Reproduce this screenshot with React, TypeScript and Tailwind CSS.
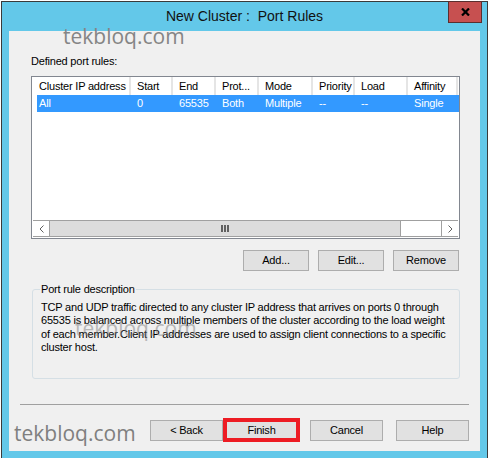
import React from "react";

const cols = [
  { wc: "w-[98px]", rc: "w-[94px] pl-[2px]", h: "Cluster IP address", v: "All" },
  { wc: "w-[42px]", rc: "w-[42px] pl-[6px]", h: "Start", v: "0" },
  { wc: "w-[43px]", rc: "w-[43px] pl-[6px]", h: "End", v: "65535" },
  { wc: "w-[43px]", rc: "w-[43px] pl-[6px]", h: "Prot...", v: "Both" },
  { wc: "w-[54px]", rc: "w-[54px] pl-[6px]", h: "Mode", v: "Multiple" },
  { wc: "w-[42px]", rc: "w-[42px] pl-[6px]", h: "Priority", v: "--" },
  { wc: "w-[53px]", rc: "w-[53px] pl-[6px]", h: "Load", v: "--" },
  { wc: "w-[50px]", rc: "w-[50px] pl-[6px]", h: "Affinity", v: "Single" },
];

const font = "font-['Liberation_Sans',Arial,sans-serif] text-[11px] tracking-[-0.2px]";

function Btn({ label, w }: { label: string; w: string }) {
  return (
    <div
      className={`${w} h-[21px] bg-[#E1E1E1] border border-[#ADADAD] flex items-center justify-center text-black whitespace-nowrap`}
    >
      {label}
    </div>
  );
}

export default function App() {
  return (
    <div className={`relative w-[488px] h-[458px] bg-white overflow-hidden ${font}`}>
      <div className="mt-[1px] ml-[1px] w-[487px] h-[457px] bg-[#63C8E9] border-l border-t border-r border-[#3A3A3A] flex flex-col">
        {/* Title bar */}
        <div className="h-[29px] flex items-center justify-center">
          <span className="text-[14px] tracking-normal text-[#111] whitespace-pre font-['Liberation_Sans',Arial,sans-serif]">
            New Cluster :  Port Rules
          </span>
        </div>
        {/* Client */}
        <div className="ml-[7px] w-[471px] h-[420px] bg-[#F0F0F0] flex flex-col">
          <div className="mt-[24px] ml-[22px] h-[13px] leading-[13px] text-black whitespace-nowrap">
            Defined port rules:
          </div>
          {/* List */}
          <div className="mt-[8px] ml-[22px] w-[429px] h-[163px] border border-[#828790] bg-white flex flex-col">
            <div className="ml-[1px] h-[18px] flex">
              {cols.map((c) => (
                <div
                  key={c.h}
                  className={`${c.wc} h-full border-r-2 border-[#E5E5E5] pl-[6px] flex items-center text-black whitespace-nowrap overflow-hidden`}
                >
                  {c.h}
                </div>
              ))}
            </div>
            <div className="ml-[5px] h-[17px] bg-[#3399FF] flex">
              {cols.map((c) => (
                <div
                  key={c.h}
                  className={`${c.rc} h-full flex items-center text-white whitespace-nowrap overflow-hidden`}
                >
                  {c.v}
                </div>
              ))}
            </div>
            <div className="flex-1" />
            {/* Scrollbar */}
            <div className="mb-[1px] ml-[1px] w-[425px] h-[17px] flex border-t border-b border-[#A0A0A0]">
              <div className="w-[16px] bg-white flex items-center justify-center">
                <svg width="5" height="8" viewBox="0 0 5 8">
                  <polyline points="4.5,0.5 1,4 4.5,7.5" fill="none" stroke="#606060" strokeWidth="1" />
                </svg>
              </div>
              <div className="w-[352px] bg-[#DCDCDC] border-x border-[#A0A0A0] flex items-center justify-center gap-[1px]">
                <div className="w-[2px] h-[7px] bg-[#606060]" />
                <div className="w-[2px] h-[7px] bg-[#606060]" />
                <div className="w-[2px] h-[7px] bg-[#606060]" />
              </div>
              <div className="w-[40px] bg-white" />
              <div className="w-[17px] border-l border-[#A0A0A0] bg-white flex items-center justify-center">
                <svg width="5" height="8" viewBox="0 0 5 8">
                  <polyline points="0.5,0.5 4,4 0.5,7.5" fill="none" stroke="#606060" strokeWidth="1" />
                </svg>
              </div>
            </div>
          </div>
          {/* Add / Edit / Remove */}
          <div className="mt-[11px] ml-[234px] flex gap-[9px]">
            <Btn label="Add..." w="w-[66px]" />
            <Btn label="Edit..." w="w-[66px]" />
            <Btn label="Remove" w="w-[66px]" />
          </div>
          {/* Group box */}
          <div className="relative mt-[18px] ml-[23px] w-[428px] h-[90px] border border-[#D5DFE5] rounded-[3px]">
            <div className="absolute -top-[7px] left-[7px] px-[1px] bg-[#F0F0F0] leading-[13px] text-black whitespace-nowrap">
              Port rule description
            </div>
            <div className="pt-[11px] pl-[8px] leading-[13.33px] text-black whitespace-nowrap">
              <div>TCP and UDP traffic directed to any cluster IP address that arrives on ports 0 through</div>
              <div>65535 is balanced across multiple members of the cluster according to the load weight</div>
              <div>of each member.Client IP addresses are used to assign client connections to a specific</div>
              <div>cluster host.</div>
            </div>
          </div>
          {/* Separator */}
          <div className="mt-[25px] ml-[11px] w-[449px] h-px bg-[#A0A0A0]" />
          {/* Bottom buttons */}
          <div className="mt-[13px] ml-[141px] h-[24px] flex items-center">
            <Btn label="< Back" w="w-[73px]" />
            <div className="w-[77px] h-[24px] border-[4px] border-[#ED1C24] bg-[#E1E1E1] flex items-center justify-center text-black">
              Finish
            </div>
            <div className="ml-[10px]">
              <Btn label="Cancel" w="w-[73px]" />
            </div>
            <div className="ml-[13px]">
              <Btn label="Help" w="w-[73px]" />
            </div>
          </div>
        </div>
      </div>

      {/* Close button */}
      <div className="absolute left-[448px] top-[1px] w-[34px] h-[22px] bg-[#C75050] border border-[#5A2E2E] flex items-center justify-center">
        <svg width="9" height="8" viewBox="0 0 9 8">
          <path d="M1 0.5 L8 7.5 M8 0.5 L1 7.5" stroke="#000" strokeWidth="2.2" />
        </svg>
      </div>

      {/* Watermarks */}
      <div className="absolute left-[63px] top-[26px] text-[21px] leading-[21px] tracking-normal text-[#858585] font-['Open_Sans',sans-serif] whitespace-nowrap">
        tekbloq.com
      </div>
      <div className="absolute left-[75px] top-[318px] text-[21px] leading-[21px] tracking-normal text-[#808080] opacity-50 font-['Open_Sans',sans-serif] whitespace-nowrap">
        tekbloq.com
      </div>
      <div className="absolute left-[14px] top-[423px] text-[21px] leading-[21px] tracking-normal text-[#7F7F7F] font-['Open_Sans',sans-serif] whitespace-nowrap">
        tekbloq.com
      </div>
    </div>
  );
}
